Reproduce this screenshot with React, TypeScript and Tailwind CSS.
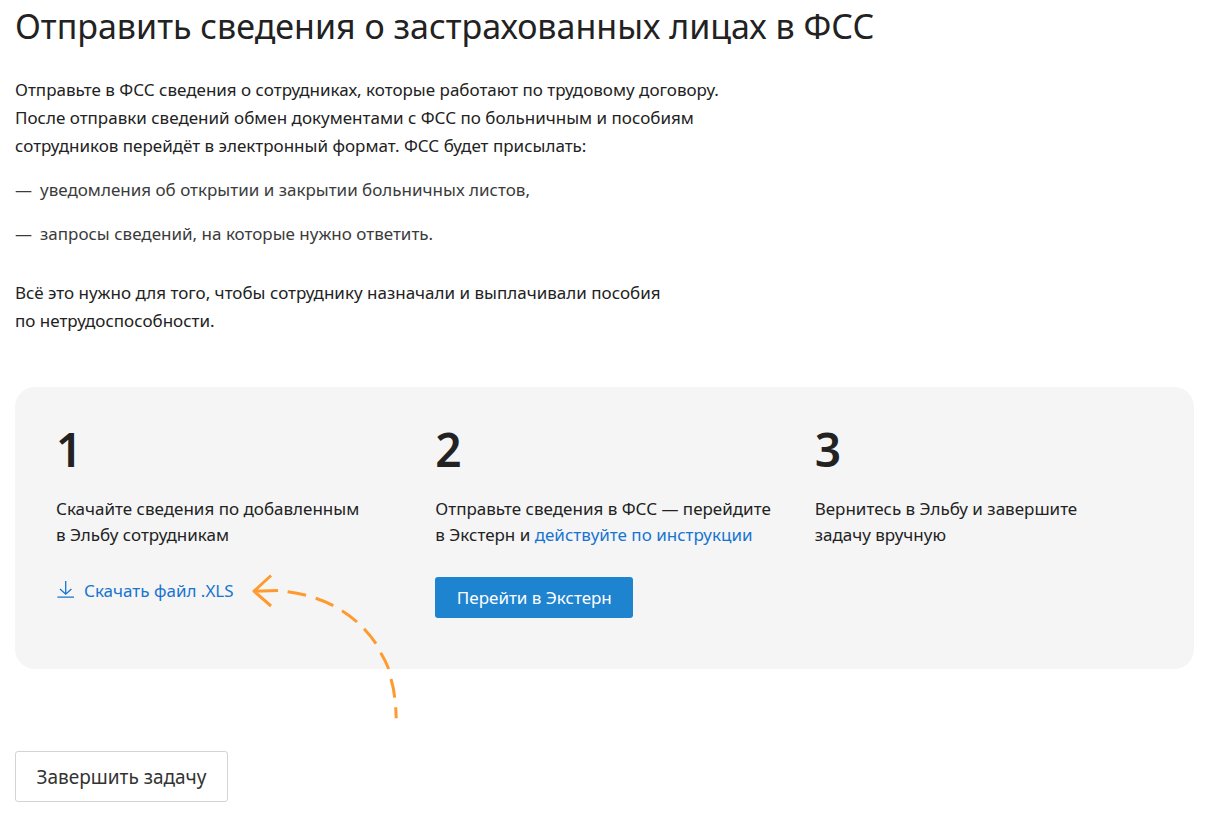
import { ReactNode } from "react";

type StepProps = {
  number: number;
  text: ReactNode;
  children?: ReactNode;
};

const notifications = [
  "уведомления об открытии и закрытии больничных листов,",
  "запросы сведений, на которые нужно ответить.",
];

const DownloadIcon = () => (
  <svg
    className="h-5 w-[18px] shrink-0"
    viewBox="0 0 18 20"
    fill="none"
    stroke="currentColor"
    strokeWidth="1.3"
    aria-hidden="true"
  >
    <path d="M9.7 0v13M4 8 9.7 13.2 15.4 8M1.4 16.1h16.6" />
  </svg>
);

// Dashed arrow that points at the download link
const HintArrow = () => (
  <svg
    className="pointer-events-none absolute -top-[5px] left-[194px] h-[150px] w-[150px]"
    viewBox="0 0 150 150"
    fill="none"
    stroke="#ff9a2e"
    strokeWidth="3"
    aria-hidden="true"
  >
    <path d="M21 3.5 4 19.2 21 34M4 19.2 28 18.6" strokeLinejoin="round" />
    <path d="M37.6 19.7Q47 20.7 56 23.3M65.7 26.3Q75 29.3 83.3 33.7M92 38.7Q100 43.7 107 50M114 56.7Q120.7 63.7 126 71.7M130.7 80.7Q135.7 89 138.7 97M141 107Q143.7 116 144.7 125.7M145.7 135.3 146.2 146.3" />
  </svg>
);

const Step = ({ number, text, children }: StepProps) => (
  <li className="relative">
    <div className="text-[46px] leading-[48px] font-semibold">{number}</div>
    <p className="mt-[23px] leading-[26px]">{text}</p>
    {children && <div className="relative mt-[29px]">{children}</div>}
  </li>
);

const App = () => {
  return (
    <main className="px-[15px] pt-1 pb-4 font-['Noto_Sans','Segoe_UI',sans-serif] text-[17px] leading-7 text-[#222]">
      <h1 className="text-[34px] leading-[44px]">
        Отправить сведения о застрахованных лицах в ФСС
      </h1>

      <p className="mt-7">
        Отправьте в ФСС сведения о сотрудниках, которые работают по трудовому договору.
        <br />
        После отправки сведений обмен документами с ФСС по больничным и пособиям
        <br />
        сотрудников перейдёт в электронный формат. ФСС будет присылать:
      </p>

      <ul className="mt-4 flex flex-col gap-4 text-[#3b3b3b]">
        {notifications.map((item) => (
          <li key={item} className="flex">
            <span className="w-[25px] shrink-0">—</span>
            {item}
          </li>
        ))}
      </ul>

      <p className="mt-[31px]">
        Всё это нужно для того, чтобы сотруднику назначали и выплачивали пособия
        <br />
        по нетрудоспособности.
      </p>

      {/* Steps */}
      <ol className="mt-[52px] grid grid-cols-3 rounded-[20px] bg-[#f5f5f5] pt-[38px] pb-[51px] pl-[41px]">
        <Step
          number={1}
          text={
            <>
              Скачайте сведения по добавленным
              <br />в Эльбу сотрудникам
            </>
          }
        >
          <a href="#download" className="inline-flex items-center gap-[10px] text-[#1874d0]">
            <DownloadIcon />
            Скачать файл .XLS
          </a>
          <HintArrow />
        </Step>
        <Step
          number={2}
          text={
            <>
              Отправьте сведения в ФСС — перейдите
              <br />в Экстерн и{" "}
              <a href="#guide" className="text-[#1874d0]">
                действуйте по инструкции
              </a>
            </>
          }
        >
          <button type="button" className="h-[41px] w-[198px] rounded-[3px] bg-[#1e84d0] text-white">
            Перейти в Экстерн
          </button>
        </Step>
        <Step
          number={3}
          text={
            <>
              Вернитесь в Эльбу и завершите
              <br />
              задачу вручную
            </>
          }
        />
      </ol>

      <button
        type="button"
        className="mt-[82px] h-[51px] w-[213px] rounded-[3px] border border-[#d4d4d4] text-[19px] text-[#333]"
      >
        Завершить задачу
      </button>
    </main>
  );
};

export default App;
